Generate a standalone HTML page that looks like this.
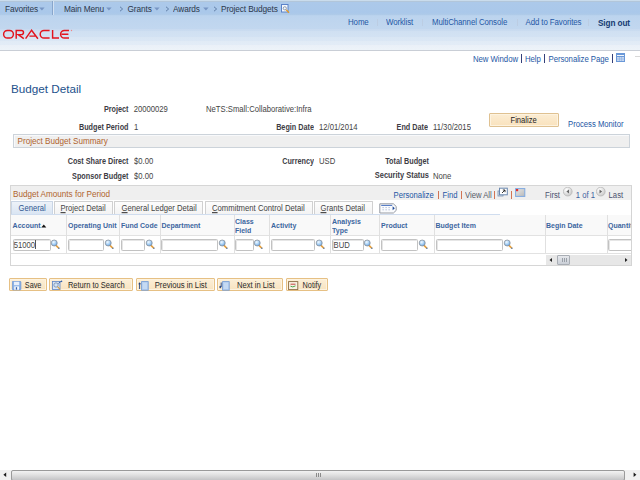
<!DOCTYPE html>
<html><head><meta charset="utf-8">
<style>
html,body{margin:0;padding:0;width:640px;height:480px;overflow:hidden;background:#fff;}
body{position:relative;font-family:"Liberation Sans",sans-serif;}
.a{position:absolute;}
.t{position:absolute;white-space:nowrap;line-height:1;font-size:7.5px;color:#333;transform:scaleY(1.15);transform-origin:0 0;}
.b{font-weight:bold;}
.r{text-align:right;}
.lnk{color:#2456a4;}
.pl{font-size:7.8px;letter-spacing:-0.05px;color:#2558a5;}
.nav{color:#2c384c;font-size:8.3px;letter-spacing:-0.12px;}
.hl{color:#2558a5;font-size:7.9px;letter-spacing:-0.1px;}
.lbl{font-weight:bold;color:#3d3d45;font-size:7.25px;}
.val{color:#444;font-size:7.7px;}
.gbx{color:#b0642e;}
.th{font-weight:bold;color:#3c66a0;font-size:7.0px;transform:scaleY(1.08)!important;}
.inp{position:absolute;background:#fff;border:1px solid #c2c2c2;border-radius:1.5px;box-shadow:inset 1px 1px 0 #e6e6e6;box-sizing:border-box;height:12px;}
.btn{position:absolute;background:linear-gradient(#fcefd8,#f8e3c0);border:1px solid #e6c084;border-radius:1px;box-shadow:inset 0 0 0 1px #fdf3e0;box-sizing:border-box;height:12.75px;}
.bt{color:#2a2a2a;font-size:7.5px;}
.sep{position:absolute;width:1px;background:#e0e0e0;}
</style></head>
<body>
<svg width="0" height="0" style="position:absolute"><defs>
<radialGradient id="lg" cx="0.4" cy="0.35" r="0.7"><stop offset="0" stop-color="#f4faff"/><stop offset="0.55" stop-color="#a4cff6"/><stop offset="1" stop-color="#5a96d8"/></radialGradient>
<symbol id="mg" viewBox="0 0 11 11"><path d="M6 6.3l2.6 2.7" stroke="#e7a03c" stroke-width="1.7" stroke-linecap="round"/><circle cx="8.9" cy="9.3" r="0.7" fill="#4a78b8"/><circle cx="4.2" cy="4" r="3" fill="url(#lg)" stroke="#8d939c" stroke-width="0.8"/></symbol>
</defs></svg>
<!-- top nav bar -->
<div class="a" style="left:0;top:0;width:640px;height:15px;background:linear-gradient(#cadcec 0,#cadcec 1px,#b2c6da 1px,#b2c6da 2px,#acc9ea 2px,#aac8ea 13px,#b0cbe8 15px);"></div>
<div class="a" style="left:52px;top:1px;width:1px;height:15px;background:#88a6cc;"></div>
<div class="a" style="left:53px;top:1px;width:1px;height:15px;background:#d4e2f2;"></div>
<div class="t nav" style="left:5px;top:4px;">Favorites</div>
<svg class="a" style="left:39px;top:7px" width="7" height="5"><path d="M0.2 0.6h5.4l-2.7 2.8z" fill="#7896c4"/></svg>
<div class="t nav" style="left:64px;top:4px;">Main Menu</div>
<svg class="a" style="left:105.5px;top:7px" width="7" height="5"><path d="M0.2 0.6h5.4l-2.7 2.8z" fill="#7896c4"/></svg>
<svg class="a" style="left:119px;top:5.5px" width="5" height="6"><path d="M1 0.8l2.6 2.2l-2.6 2.2" fill="none" stroke="#4f6d98" stroke-width="0.8"/></svg>
<div class="t nav" style="left:127.5px;top:4px;">Grants</div>
<svg class="a" style="left:154px;top:7px" width="7" height="5"><path d="M0.2 0.6h5.4l-2.7 2.8z" fill="#7896c4"/></svg>
<svg class="a" style="left:164.5px;top:5.5px" width="5" height="6"><path d="M1 0.8l2.6 2.2l-2.6 2.2" fill="none" stroke="#4f6d98" stroke-width="0.8"/></svg>
<div class="t nav" style="left:173px;top:4px;">Awards</div>
<svg class="a" style="left:203px;top:7px" width="7" height="5"><path d="M0.2 0.6h5.4l-2.7 2.8z" fill="#7896c4"/></svg>
<svg class="a" style="left:213px;top:5.5px" width="5" height="6"><path d="M1 0.8l2.6 2.2l-2.6 2.2" fill="none" stroke="#4f6d98" stroke-width="0.8"/></svg>
<div class="t nav" style="left:221px;top:4px;">Project Budgets</div>
<svg class="a" style="left:281px;top:4px" width="10" height="10"><rect x="0.5" y="0.5" width="6.5" height="7.5" fill="#f4f7fc" stroke="#5a82c8" stroke-width="1"/><circle cx="3.8" cy="4.3" r="1.6" fill="none" stroke="#7a8aa0" stroke-width="0.8"/><path d="M5.2 5.8l2.8 3" stroke="#e39a2a" stroke-width="1.3"/></svg>
<!-- header -->
<div class="a" style="left:0;top:15px;width:640px;height:35px;background:linear-gradient(#b6d0ec 0,#bcd4ee 1px,#c2d7ef 14px,#c8daf0 14px,#cadcf0 16px,#d0e0f2 16px,#d3e2f3 22px,#d9e6f4 22px,#dbe7f5 26px,#e1ebf6 26px,#e3ecf7 30px,#eaf0f8 30px,#edf3f9 35px);"></div>
<div class="a" style="left:0;top:50px;width:640px;height:1px;background:#c9ced6;"></div>
<svg class="a" style="left:0;top:25.6px" width="80" height="16">
<g fill="none" stroke="#e3141e" stroke-width="1.45">
<rect x="3.6" y="4.4" width="9.8" height="7.6" rx="3.8"/>
<path d="M16.2 12.7V4.4h5.2a2.1 2.1 0 0 1 0 4.2h-3.2l5.6 4.1"/>
<path d="M25.6 12.7L31.6 4.2l6.3 8.5M29.4 10.1h5.8"/>
<path d="M49.6 4.4h-5.6a3.8 3.8 0 0 0 0 7.6h5.6"/>
<path d="M52.6 4.0V12h6.4"/>
<path d="M69 4.4h-4.6a3.8 3.8 0 0 0 0 7.6h4.6M61.6 8.2h6.8"/>
</g>
<circle cx="71.5" cy="4.5" r="0.7" fill="#e88"/>
</svg>
<div class="t hl" style="left:348px;top:18.3px;">Home</div>
<div class="a" style="left:377px;top:18.5px;width:1px;height:7.5px;background:#bccde3;"></div>
<div class="t hl" style="left:386px;top:18.3px;">Worklist</div>
<div class="a" style="left:422px;top:18.5px;width:1px;height:7.5px;background:#bccde3;"></div>
<div class="t hl" style="left:432px;top:18.3px;">MultiChannel Console</div>
<div class="a" style="left:516.5px;top:18.5px;width:1px;height:7.5px;background:#bccde3;"></div>
<div class="t hl" style="left:525.5px;top:18.3px;">Add to Favorites</div>
<div class="a" style="left:588px;top:18.5px;width:1px;height:7.5px;background:#bccde3;"></div>
<div class="t hl b" style="left:598px;top:18.5px;color:#163b72;font-size:8.2px;">Sign out</div>
<!-- page links -->
<div class="t lnk pl" style="left:473px;top:54.5px;">New Window</div>
<div class="a" style="left:521px;top:53.5px;width:1px;height:9.5px;background:#34407a;"></div>
<div class="t lnk pl" style="left:525px;top:54.5px;">Help</div>
<div class="a" style="left:544px;top:53.5px;width:1px;height:9.5px;background:#34407a;"></div>
<div class="t lnk pl" style="left:548.5px;top:54.5px;">Personalize Page</div>
<div class="a" style="left:611.5px;top:53.5px;width:1px;height:9.5px;background:#34407a;"></div>
<svg class="a" style="left:616px;top:53px" width="10" height="10"><rect x="0" y="0" width="9" height="9" fill="#6a98d8"/><rect x="1" y="2" width="7" height="1" fill="#f2f6fc"/><rect x="1" y="4" width="7" height="4" fill="#c4d6ef"/><path d="M1 6h7M3.5 4v4M5.5 4v4" stroke="#8fb0e0" stroke-width="0.6"/></svg>
<div class="a" style="left:635px;top:56px;width:5px;height:1px;background:#d8d8d8;"></div>
<!-- title -->
<div class="t" style="left:11px;top:82.8px;font-size:11.7px;color:#23518c;transform:scaleY(0.97);">Budget Detail</div>
<div class="t lbl r" style="right:511.5px;top:104.5px;">Project</div>
<div class="t val" style="left:133.7px;top:104.5px;">20000029</div>
<div class="t val" style="left:206px;top:104.5px;">NeTS:Small:Collaborative:Infra</div>
<div class="t lbl r" style="right:511.5px;top:122.5px;">Budget Period</div>
<div class="t val" style="left:134px;top:122.5px;">1</div>
<div class="t lbl r" style="right:326px;top:122.5px;">Begin Date</div>
<div class="t val" style="left:319px;top:122.5px;">12/01/2014</div>
<div class="t lbl r" style="right:212px;top:122.5px;">End Date</div>
<div class="t val" style="left:433px;top:122.5px;">11/30/2015</div>
<div class="btn" style="left:489px;top:113px;width:70px;height:13.5px;background:linear-gradient(#fcedd3,#f9e2bd);border-color:#dfc191;"></div>
<div class="t" style="left:510.5px;top:116px;color:#222;font-size:7.6px;">Finalize</div>
<div class="t lnk" style="left:568px;top:120px;font-size:7.7px;">Process Monitor</div>
<!-- summary group box -->
<div class="a" style="left:13px;top:134px;width:617px;height:14px;background:#efefef;border:1px solid #ccd3da;box-shadow:inset 1px 1px 0 #f8f9fb;box-sizing:border-box;"></div>
<div class="t gbx" style="left:17.5px;top:136.7px;font-size:8.15px;">Project Budget Summary</div>
<div class="t lbl r" style="right:511.5px;top:157px;">Cost Share Direct</div>
<div class="t val" style="left:134px;top:157px;">$0.00</div>
<div class="t lbl r" style="right:326px;top:157px;">Currency</div>
<div class="t val" style="left:319px;top:157px;">USD</div>
<div class="t lbl r" style="right:211px;top:157px;">Total Budget</div>
<div class="t lbl r" style="right:511.5px;top:172px;">Sponsor Budget</div>
<div class="t val" style="left:134px;top:172px;">$0.00</div>
<div class="t lbl r" style="right:211px;top:171px;font-size:7.45px;">Security Status</div>
<div class="t val" style="left:433px;top:172px;">None</div>
<!-- grid -->
<div class="a" style="left:10px;top:185px;width:622px;height:81px;border:1px solid #d6d6d6;box-sizing:border-box;background:#fff;"></div>
<div class="a" style="left:11px;top:186px;width:620px;height:14px;background:#efefef;"></div>
<div class="t gbx" style="left:13px;top:190px;font-size:8.15px;">Budget Amounts for Period</div>
<div class="t lnk" style="left:393.5px;top:190.5px;font-size:7.7px;">Personalize</div>
<div class="a" style="left:438px;top:191px;width:1px;height:7.5px;background:#d27454;"></div>
<div class="t lnk" style="left:442.5px;top:190.5px;font-size:7.7px;">Find</div>
<div class="a" style="left:461px;top:191px;width:1px;height:7.5px;background:#d27454;"></div>
<div class="t" style="left:465px;top:190.5px;color:#555a66;font-size:7.7px;">View All</div>
<div class="a" style="left:494px;top:191px;width:1px;height:7.5px;background:#d27454;"></div>
<svg class="a" style="left:497px;top:187px" width="12" height="11"><rect x="1" y="4" width="5" height="5" fill="#dfe6ef" stroke="#7890b0" stroke-width="0.8"/><rect x="2.5" y="1.2" width="7.8" height="6.6" fill="#fff" stroke="#6a88b0" stroke-width="1"/><path d="M5 6l3-3M5.8 3h2.2v2.2" fill="none" stroke="#222" stroke-width="0.9"/></svg>
<div class="a" style="left:511px;top:191px;width:1px;height:7.5px;background:#d27454;"></div>
<svg class="a" style="left:514.5px;top:187.5px" width="11" height="10"><defs><linearGradient id="dg" x1="0" y1="0" x2="1" y2="1"><stop offset="0" stop-color="#e8e8e8"/><stop offset="1" stop-color="#b8b8b8"/></linearGradient></defs><rect x="0.6" y="0.6" width="9.2" height="7.8" fill="url(#dg)" stroke="#7ea8e0" stroke-width="1"/><rect x="1" y="1" width="2.2" height="2.2" fill="#e03030"/></svg>
<div class="t" style="left:545px;top:190.5px;color:#4d5270;font-size:7.7px;">First</div>
<svg class="a" style="left:562.5px;top:187.2px" width="10" height="10"><defs><radialGradient id="cg" cx="0.35" cy="0.3" r="0.8"><stop offset="0" stop-color="#fff"/><stop offset="1" stop-color="#c4c4c4"/></radialGradient></defs><circle cx="4.75" cy="4.6" r="4.4" fill="url(#cg)" stroke="#b4b4b4" stroke-width="0.7"/><path d="M6 2.6v4l-2.6-2z" fill="#666"/></svg>
<div class="t" style="left:575.8px;top:190.5px;color:#3d62a0;font-size:7.7px;">1 of 1</div>
<svg class="a" style="left:595.75px;top:187.2px" width="10" height="10"><circle cx="4.75" cy="4.6" r="4.4" fill="url(#cg)" stroke="#b4b4b4" stroke-width="0.7"/><path d="M3.5 2.6v4l2.6-2z" fill="#666"/></svg>
<div class="t" style="left:608.6px;top:190.5px;color:#4d5270;font-size:7.7px;">Last</div>
<!-- tabs -->
<div class="a" style="left:11px;top:201px;width:42px;height:14px;background:linear-gradient(#edf2f9,#d8e4f2);border:1px solid #c9d5e5;border-bottom:none;border-radius:1px 1px 0 0;box-sizing:border-box;"></div>
<div class="t" style="left:18.6px;top:204px;color:#2f5690;font-size:7.6px;">General</div>
<div class="a" style="left:54px;top:201px;width:59px;height:13px;background:linear-gradient(#fdfdfd,#f3f3f3);border:1px solid #d0d0d0;border-bottom:none;border-radius:1px 1px 0 0;box-sizing:border-box;"></div>
<div class="t" style="left:60.5px;top:204px;color:#444;font-size:7.6px;"><u>P</u>roject Detail</div>
<div class="a" style="left:114px;top:201px;width:89px;height:13px;background:linear-gradient(#fdfdfd,#f3f3f3);border:1px solid #d0d0d0;border-bottom:none;border-radius:1px 1px 0 0;box-sizing:border-box;"></div>
<div class="t" style="left:121.6px;top:204px;color:#444;font-size:7.68px;"><u>G</u>eneral Ledger Detail</div>
<div class="a" style="left:205px;top:201px;width:108px;height:13px;background:linear-gradient(#fdfdfd,#f3f3f3);border:1px solid #d0d0d0;border-bottom:none;border-radius:1px 1px 0 0;box-sizing:border-box;"></div>
<div class="t" style="left:212px;top:204px;color:#444;font-size:7.72px;"><u>C</u>ommitment Control Detail</div>
<div class="a" style="left:314px;top:201px;width:59px;height:13px;background:linear-gradient(#fdfdfd,#f3f3f3);border:1px solid #d0d0d0;border-bottom:none;border-radius:1px 1px 0 0;box-sizing:border-box;"></div>
<div class="t" style="left:320.5px;top:204px;color:#444;font-size:7.6px;"><u>G</u>rants Detail</div>
<div class="a" style="left:11px;top:214px;width:489px;height:1px;background:#d0ddef;"></div>
<svg class="a" style="left:378.5px;top:202.5px" width="19" height="11"><path d="M0.8 0.8h13.6l2.8 2.6v4l-2.8 2.6H0.8z" fill="#fafbfd" stroke="#8a8f98" stroke-width="0.9"/><path d="M2.2 2.4h11" stroke="#3060b8" stroke-width="0.9"/><path d="M3.6 4.6h1M6.6 4.6h1M9.6 4.6h1M3.6 6.8h1M6.6 6.8h1M9.6 6.8h1" stroke="#8aa0c8" stroke-width="0.9"/><path d="M13.6 3.2v4l2.2-2z" fill="#1e4a9a"/></svg>
<!-- table header -->
<div class="a" style="left:11px;top:215px;width:620px;height:20.5px;background:#f9f9f9;border-bottom:1px solid #e2e2e2;box-sizing:border-box;"></div>
<div class="t th" style="left:12.6px;top:222px;">Account</div>
<svg class="a" style="left:40.5px;top:223.5px" width="6" height="4"><path d="M0.3 3.4L2.8 0.4 5.3 3.4z" fill="#111"/></svg>
<div class="t th" style="left:68px;top:222px;">Operating Unit</div>
<div class="t th" style="left:121px;top:222px;">Fund Code</div>
<div class="t th" style="left:161.5px;top:222px;">Department</div>
<div class="t th" style="left:235px;top:217.6px;line-height:8.2px;">Class<br>Field</div>
<div class="t th" style="left:271px;top:222px;">Activity</div>
<div class="t th" style="left:332px;top:217.6px;line-height:8.2px;">Analysis<br>Type</div>
<div class="t th" style="left:381px;top:222px;">Product</div>
<div class="t th" style="left:435.5px;top:222px;">Budget Item</div>
<div class="t th" style="left:546px;top:222px;">Begin Date</div>
<div class="t th" style="left:608px;top:222px;">Quantity</div>
<!-- row -->
<div class="a" style="left:11px;top:253px;width:620px;height:1px;background:#e2e2e2;"></div>
<div class="sep" style="left:66px;top:215px;height:38px;"></div>
<div class="sep" style="left:119px;top:215px;height:38px;"></div>
<div class="sep" style="left:160px;top:215px;height:38px;"></div>
<div class="sep" style="left:234px;top:215px;height:38px;"></div>
<div class="sep" style="left:269px;top:215px;height:38px;"></div>
<div class="sep" style="left:330px;top:215px;height:38px;"></div>
<div class="sep" style="left:379px;top:215px;height:38px;"></div>
<div class="sep" style="left:434px;top:215px;height:38px;"></div>
<div class="sep" style="left:545px;top:215px;height:38px;"></div>
<div class="sep" style="left:607px;top:215px;height:38px;"></div>
<div class="inp" style="left:12.5px;top:238.5px;width:38.5px;"></div>
<div class="t val" style="left:13.7px;top:240.6px;">51000</div>
<div class="inp" style="left:67.5px;top:238.5px;width:36px;"></div>
<div class="inp" style="left:120.5px;top:238.5px;width:24px;"></div>
<div class="inp" style="left:161px;top:238.5px;width:56.5px;"></div>
<div class="inp" style="left:235px;top:238.5px;width:19px;"></div>
<div class="inp" style="left:271px;top:238.5px;width:43.5px;"></div>
<div class="inp" style="left:332px;top:238.5px;width:32px;"></div>
<div class="t val" style="left:333.6px;top:240.6px;">BUD</div>
<div class="inp" style="left:381px;top:238.5px;width:37px;"></div>
<div class="inp" style="left:435.5px;top:238.5px;width:67px;"></div>
<div class="inp" style="left:608px;top:238.5px;width:30px;"></div>
<svg class="a" style="left:50.0px;top:239.0px" width="11" height="11"><use href="#mg"/></svg>
<svg class="a" style="left:103.5px;top:239.0px" width="11" height="11"><use href="#mg"/></svg>
<svg class="a" style="left:144.5px;top:239.0px" width="11" height="11"><use href="#mg"/></svg>
<svg class="a" style="left:217.5px;top:239.0px" width="11" height="11"><use href="#mg"/></svg>
<svg class="a" style="left:253.0px;top:239.0px" width="11" height="11"><use href="#mg"/></svg>
<svg class="a" style="left:314.5px;top:239.0px" width="11" height="11"><use href="#mg"/></svg>
<svg class="a" style="left:363.0px;top:239.0px" width="11" height="11"><use href="#mg"/></svg>
<svg class="a" style="left:418.0px;top:239.0px" width="11" height="11"><use href="#mg"/></svg>
<svg class="a" style="left:502.5px;top:239.0px" width="11" height="11"><use href="#mg"/></svg>
<div class="a" style="left:35px;top:240px;width:1px;height:9px;background:#555;"></div>
<!-- scrollbar -->
<div class="a" style="left:546px;top:254.5px;width:85px;height:10.5px;background:#e7e7e7;"></div>
<svg class="a" style="left:548px;top:256px" width="6" height="8"><path d="M4 2v4l-2.5-2z" fill="#222"/></svg>
<svg class="a" style="left:622.5px;top:256px" width="6" height="8"><path d="M2 2v4l2.5-2z" fill="#222"/></svg>
<div class="a" style="left:557px;top:255px;width:12.5px;height:9.5px;background:linear-gradient(#e6e8ec,#c9ced6);border:1px solid #a9aeb5;border-radius:1px;box-sizing:border-box;"></div>
<div class="a" style="left:561.5px;top:257.5px;width:1px;height:4px;background:#9aa0a8;"></div>
<div class="a" style="left:563.5px;top:257.5px;width:1px;height:4px;background:#9aa0a8;"></div>
<div class="a" style="left:565.5px;top:257.5px;width:1px;height:4px;background:#9aa0a8;"></div>
<!-- clip right -->
<div class="a" style="left:631.5px;top:184px;width:9px;height:84px;background:#fff;"></div>
<div class="a" style="left:630.5px;top:185.5px;width:1px;height:80px;background:#d4d4d4;"></div>
<!-- buttons -->
<div class="btn" style="left:9px;top:278px;width:38px;"></div>
<svg class="a" style="left:11.5px;top:280.5px" width="10" height="10"><rect x="0.3" y="0.3" width="8.6" height="8.6" rx="0.8" fill="#8db3e6" stroke="#5b8ad0" stroke-width="0.6"/><rect x="2" y="0.8" width="5.2" height="3.4" fill="#e8f0fb"/><rect x="2.2" y="5.4" width="4.8" height="3.4" fill="#f4f8fd"/><rect x="3.8" y="6.2" width="1.3" height="2.4" fill="#3a66b0"/></svg>
<div class="t bt" style="left:24.8px;top:281.3px;font-size:7.3px;">Save</div>
<div class="btn" style="left:49px;top:278px;width:83.7px;"></div>
<svg class="a" style="left:51.5px;top:280px" width="11" height="11"><rect x="0.5" y="1.5" width="7.5" height="8" fill="#dbe7f6" stroke="#5b86c6" stroke-width="0.8"/><circle cx="4" cy="5" r="2.2" fill="#cfe4fa" stroke="#6a7c98" stroke-width="0.7"/><path d="M5.5 6.7l2.6 2.8" stroke="#d89a30" stroke-width="1.1"/><path d="M6.5 3.5q1.5-2.5 3.5-2" fill="none" stroke="#2a5aa8" stroke-width="0.9"/><path d="M9.3 0.2l1.3 1.1-1.6.8z" fill="#2a5aa8"/></svg>
<div class="t bt" style="left:67.9px;top:281.3px;font-size:7.5px;">Return to Search</div>
<div class="btn" style="left:135.5px;top:278px;width:79px;"></div>
<svg class="a" style="left:137.5px;top:280.5px" width="11" height="10"><rect x="3.6" y="0.6" width="6.6" height="8.6" fill="#b7d0f0" stroke="#6f98d4" stroke-width="0.8"/><path d="M5 3h4M5 5h4M5 7h4" stroke="#e8f0fb" stroke-width="0.6"/><path d="M1.6 8V2.2" stroke="#1f3f80" stroke-width="0.9"/><path d="M0.2 3.2L1.6 1.2 3 3.2z" fill="#1f3f80"/></svg>
<div class="t bt" style="left:154.7px;top:281.3px;font-size:7.7px;">Previous in List</div>
<div class="btn" style="left:217.2px;top:278px;width:65.7px;"></div>
<svg class="a" style="left:219px;top:280.5px" width="11" height="10"><rect x="3.6" y="0.6" width="6.6" height="8.6" fill="#b7d0f0" stroke="#6f98d4" stroke-width="0.8"/><path d="M5 3h4M5 5h4M5 7h4" stroke="#e8f0fb" stroke-width="0.6"/><path d="M2.2 1.5v4.5H0.4" fill="none" stroke="#1f3f80" stroke-width="0.9"/><path d="M0.2 6L1.8 4.6v2.8z" fill="#1f3f80"/></svg>
<div class="t bt" style="left:237px;top:281.3px;font-size:7.6px;">Next in List</div>
<div class="btn" style="left:285.5px;top:278px;width:42px;"></div>
<svg class="a" style="left:288px;top:280.5px" width="11" height="10"><rect x="0.6" y="0.6" width="9.2" height="8" fill="#f8f2e4" stroke="#8a6a40" stroke-width="0.9"/><path d="M2.5 3.2h5" stroke="#c03030" stroke-width="0.9"/><path d="M2.5 5.2q2 1.5 5-0.3" fill="none" stroke="#3a9a3a" stroke-width="0.9"/></svg>
<div class="t bt" style="left:302.6px;top:281.3px;font-size:7.3px;">Notify</div>
<!-- browser scrollbar -->
<div class="a" style="left:0;top:469.5px;width:640px;height:10.5px;background:#f0f0f0;"></div>
<svg class="a" style="left:2px;top:471px" width="6" height="8"><path d="M4.2 1.4v4.6l-2.8-2.3z" fill="#1a1a1a"/></svg>
<svg class="a" style="left:632px;top:471px" width="6" height="8"><path d="M1.6 1.4v4.6l2.8-2.3z" fill="#1a1a1a"/></svg>
<div class="a" style="left:11px;top:469.8px;width:614px;height:11px;background:linear-gradient(#f2f2f2,#e2e2e2 40%,#c4c4c6);border:1px solid #9a9a9a;border-radius:2px;box-sizing:border-box;"></div>
<div class="a" style="left:315.5px;top:473px;width:1px;height:4px;background:#8a8a8a;"></div>
<div class="a" style="left:317.5px;top:473px;width:1px;height:4px;background:#8a8a8a;"></div>
<div class="a" style="left:319.5px;top:473px;width:1px;height:4px;background:#8a8a8a;"></div>
</body></html>
